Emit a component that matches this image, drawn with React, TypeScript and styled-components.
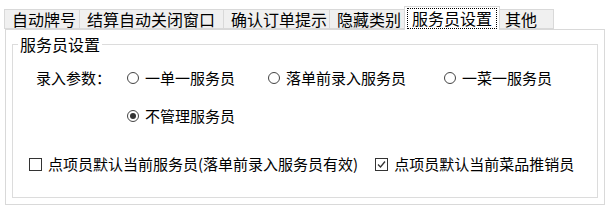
import React from 'react'
import styled, { createGlobalStyle } from 'styled-components'

const GlobalStyle = createGlobalStyle`
  html, body {
    margin: 0;
    padding: 0;
    background: #fff;
  }
  body {
    font-family: "Noto Sans CJK SC", "Noto Sans", sans-serif;
    color: #000;
  }
`

const tabs = [
  { title: '自动牌号', width: 76 },
  { title: '结算自动关闭窗口', width: 144 },
  { title: '确认订单提示', width: 106 },
  { title: '隐藏类别', width: 76 },
  { title: '服务员设置', width: 96 },
  { title: '其他', width: 56 },
]
const activeTab = 4

const modes = [
  { label: '一单一服务员', checked: false },
  { label: '落单前录入服务员', checked: false },
  { label: '一菜一服务员', checked: false },
  { label: '不管理服务员', checked: true },
]

const Window = styled.div`
  width: 605px;
  height: 208px;
  padding-top: 6px;
  box-sizing: border-box;
  overflow: hidden;
`

const TabStrip = styled.div`
  display: flex;
  align-items: flex-end;
  height: 23px;
  padding-left: 4px;
`

const Tab = styled.div<{ $active?: boolean; $width: number }>`
  position: relative;
  box-sizing: border-box;
  width: ${p => p.$width}px;
  height: ${p => (p.$active ? '24px' : '20px')};
  margin: ${p => (p.$active ? '0 -2px -1px' : '0')};
  padding: ${p => (p.$active ? '1px 2px 0' : '0 0 0 7px')};
  border: 1px solid #d9d9d9;
  border-bottom: ${p => (p.$active ? 'none' : '1px solid #d9d9d9')};
  border-left-width: ${p => (p.$active ? '1px' : '0')};
  background: ${p => (p.$active ? '#fff' : '#f0f0f0')};
  z-index: ${p => (p.$active ? 1 : 0)};
  font-size: 16px;
  line-height: 18px;
  white-space: nowrap;

  &:first-child {
    border-left-width: 1px;
  }
`

const FocusLabel = styled.span`
  display: block;
  border: 1px dotted #000;
  line-height: 19px;
  text-align: center;
`

const Panel = styled.div`
  margin-left: 5px;
  width: 600px;
  height: 176px;
  box-sizing: border-box;
  border: 1px solid #d9d9d9;
  padding: 14px 6px 6px;
`

const Group = styled.div`
  position: relative;
  height: 154px;
  box-sizing: border-box;
  border: 1px solid #dcdcdc;
  padding: 23px 0 0 16px;
`

const GroupTitle = styled.span`
  position: absolute;
  top: -10px;
  left: 5px;
  padding: 0 2px;
  background: #fff;
  font-size: 16px;
  line-height: 18px;
`

const ModeGrid = styled.div`
  display: grid;
  grid-template-columns: 91px 141px 176px auto;
  row-gap: 18px;
  margin-left: 7px;
  font-size: 15px;
  line-height: 20px;
`

const FieldLabel = styled.span`
  grid-column: 1;
  grid-row: 1;
`

const Option = styled.label`
  display: flex;
  align-items: center;
  gap: 6px;
  white-space: nowrap;
`

const Radio = styled.span<{ $checked?: boolean }>`
  position: relative;
  width: 12px;
  height: 12px;
  box-sizing: border-box;
  border: 1px solid #444;
  border-radius: 50%;
  background: #fff;

  &::after {
    content: '';
    display: ${p => (p.$checked ? 'block' : 'none')};
    position: absolute;
    left: 2px;
    top: 2px;
    width: 6px;
    height: 6px;
    border-radius: 50%;
    background: #333;
  }
`

const CheckRow = styled.div`
  display: flex;
  align-items: center;
  gap: 17px;
  margin-top: 28px;
  font-size: 15px;
  line-height: 20px;
`

const Box = styled.span`
  display: flex;
  align-items: center;
  justify-content: center;
  width: 13px;
  height: 13px;
  box-sizing: border-box;
  border: 1px solid #333;
  background: #fff;
`

const Check = ({ label, checked }: { label: string; checked?: boolean }) => (
  <Option>
    <Box>
      {checked && (
        <svg width="9" height="9" viewBox="0 0 9 9">
          <path d="M1 4.5 L3.5 7 L8 1.5" fill="none" stroke="#333" strokeWidth="1.3" />
        </svg>
      )}
    </Box>
    {label}
  </Option>
)

export default function App() {
  return (
    <Window>
      <GlobalStyle />
      <TabStrip>
        {tabs.map((t, i) =>
          i === activeTab ? (
            <Tab key={t.title} $width={t.width} $active>
              <FocusLabel>{t.title}</FocusLabel>
            </Tab>
          ) : (
            <Tab key={t.title} $width={t.width}>
              {t.title}
            </Tab>
          ),
        )}
      </TabStrip>
      <Panel>
        <Group>
          <GroupTitle>服务员设置</GroupTitle>
          <ModeGrid>
            <FieldLabel>录入参数：</FieldLabel>
            {modes.map((m, i) => (
              <Option
                key={m.label}
                style={i === 3 ? { gridColumn: 2, gridRow: 2 } : undefined}
              >
                <Radio $checked={m.checked} />
                {m.label}
              </Option>
            ))}
          </ModeGrid>
          <CheckRow>
            <Check label="点项员默认当前服务员(落单前录入服务员有效)" />
            <Check label="点项员默认当前菜品推销员" checked />
          </CheckRow>
        </Group>
      </Panel>
    </Window>
  )
}
